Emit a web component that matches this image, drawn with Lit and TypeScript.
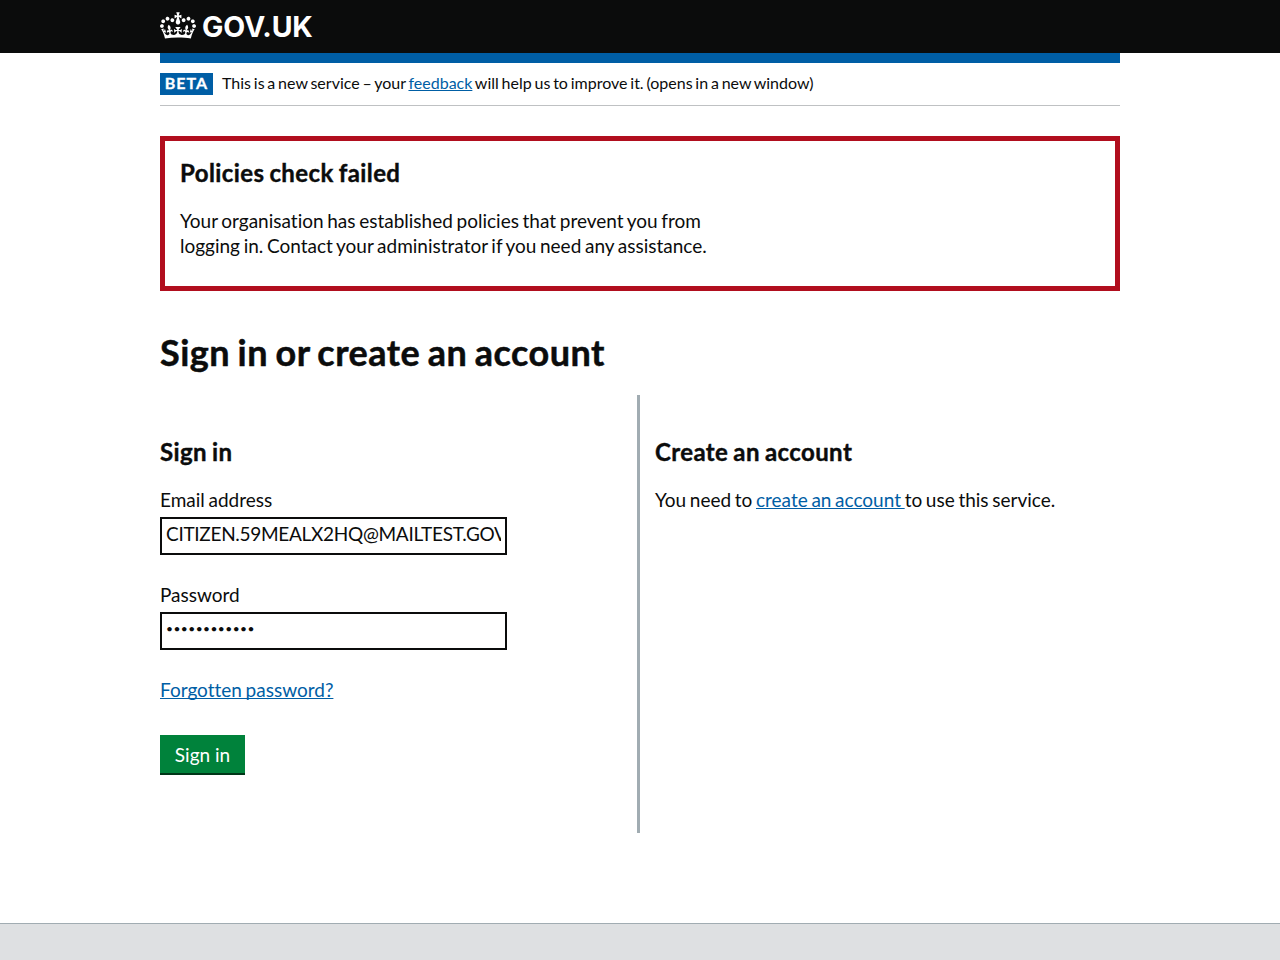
import { LitElement, html, css } from "lit";
import { customElement } from "lit/decorators.js";

@customElement("app-root")
export class AppRoot extends LitElement {
  static styles = css`
    :host { display: flex; flex-direction: column; height: 960px; overflow: hidden; background: #fff; color: #0b0c0c; font: 19px/25px Lato, "Noto Sans", sans-serif; font-variant-ligatures: none; word-spacing: -1.2px; }
    * { box-sizing: border-box; }
    h1, h2, p { margin: 0; }
    a { color: #005ea5; text-decoration: underline; text-underline-offset: 1px; text-decoration-thickness: 1px; text-decoration-skip-ink: none; }
    .wrap { width: 960px; margin: 0 auto; }
    .header { height: 53px; flex: none; background: #0b0c0c; color: #fff; }
    .brand { display: flex; gap: 6px; padding-top: 9px; }
    .crown { width: 36px; height: 27px; margin-top: 3px; }
    .logo { font: 650 28.5px/36px Inter, sans-serif; letter-spacing: -0.15px; white-space: nowrap; }
    .bar { height: 10px; background: #005ea5; }
    .phase { display: flex; align-items: center; gap: 9px; height: 43px; border-bottom: 1px solid #bfc1c3; font-size: 16px; line-height: 20px; white-space: nowrap; }
    .phase-text { padding-bottom: 2px; word-spacing: -1.3px; }
    .tag { width: 53px; height: 22px; background: #005ea5; color: #fff; font-weight: 700; line-height: 20px; text-align: center; letter-spacing: 1px; -webkit-text-stroke: 0.3px; }
    .error { margin-top: 30px; height: 155px; border: 5px solid #b10e1e; padding: 17px 15px 0; }
    h2 { font-size: 24px; line-height: 30px; font-weight: 700; white-space: nowrap; -webkit-text-stroke: 0.4px; letter-spacing: 0.4px; }
    h1 { margin-top: 41px; height: 63px; font-size: 36px; line-height: 40px; font-weight: 700; white-space: nowrap; letter-spacing: 0.5px; word-spacing: -1.8px; -webkit-text-stroke: 0.5px; }
    p { margin-top: 20px; white-space: nowrap; }
    .cols { display: grid; grid-template-columns: 480px 480px; height: 438px; }
    .left { border-right: 3px solid #a1acb2; padding-top: 42px; }
    .right { padding: 42px 15px 0; }
    .label { display: block; margin-top: 20px; }
    .second { margin-top: 27px; }
    .field { display: block; width: 347px; height: 38px; margin-top: 5px; border: 2px solid #0b0c0c; border-radius: 0; padding: 0 4px 5px; font: inherit; color: inherit; background: #fff; outline: none; }
    .email { letter-spacing: -0.3px; }
    .password { font-size: 12px; letter-spacing: 0.45px; padding-bottom: 5px; }
    .forgot { margin-top: 27px; }
    .button { display: block; margin-top: 33px; width: 85px; height: 40px; border: 0; border-bottom: 2px solid #003618; padding: 0; background: #00823b; color: #fff; font: inherit; }
    .footer { margin-top: 90px; flex: 1; background: #dee0e2; border-top: 1px solid #a1acb2; }
  `;
  render() {
    return html`
      <header class="header"><div class="wrap brand">
        <svg class="crown" viewBox="0 0 132 97"><path fill="currentColor" fill-rule="evenodd" d="M25 30.2c3.5 1.5 7.7-.2 9.1-3.7 1.5-3.6-.2-7.8-3.9-9.2-3.6-1.4-7.6.3-9.1 3.9-1.4 3.5.3 7.5 3.9 9zM9 39.5c3.6 1.5 7.8-.2 9.2-3.7 1.5-3.6-.2-7.8-3.9-9.1-3.6-1.5-7.6.2-9.1 3.8-1.4 3.5.3 7.5 3.8 9zM4.4 57.2c3.5 1.5 7.7-.2 9.1-3.8 1.5-3.6-.2-7.7-3.9-9.1-3.5-1.5-7.6.3-9.1 3.8-1.4 3.5.3 7.6 3.9 9.1zm38.3-21.4c3.5 1.5 7.7-.2 9.1-3.8 1.5-3.6-.2-7.7-3.9-9.1-3.6-1.5-7.6.3-9.1 3.8-1.3 3.6.4 7.7 3.9 9.1zm64.4-5.6c-3.6 1.5-7.8-.2-9.1-3.7-1.5-3.6.2-7.8 3.8-9.2 3.6-1.4 7.7.3 9.2 3.9 1.3 3.5-.4 7.5-3.9 9zm15.9 9.3c-3.6 1.5-7.7-.2-9.1-3.7-1.5-3.6.2-7.8 3.7-9.1 3.6-1.5 7.7.2 9.2 3.8 1.5 3.5-.3 7.5-3.8 9zm4.7 17.7c-3.6 1.5-7.8-.2-9.2-3.8-1.5-3.6.2-7.7 3.9-9.1 3.6-1.5 7.7.3 9.2 3.8 1.3 3.5-.4 7.6-3.9 9.1zM89.3 35.8c-3.6 1.5-7.8-.2-9.2-3.8-1.4-3.6.2-7.7 3.9-9.1 3.6-1.5 7.7.3 9.2 3.8 1.4 3.6-.3 7.7-3.9 9.1zM69.7 17.7l8.9 4.7V9.3l-8.9 2.8c-.2-.3-.5-.6-.9-.9L72.4 0H59.6l3.5 11.2c-.3.3-.6.5-.9.9l-8.8-2.8v13.1l8.8-4.7c.3.3.6.7.9.9l-5 15.4v.1c-.2.8-.4 1.6-.4 2.4 0 4.1 3.1 7.5 7 8.1h.2c.3 0 .7.1 1 .1.4 0 .7 0 1-.1h.2c4-.6 7.1-4.1 7.1-8.1 0-.8-.1-1.7-.4-2.4V34l-5.1-15.4c.4-.2.7-.6 1-.9zM66 92.8c16.9 0 32.8 1.1 47.1 3.2 4-16.9 8.9-26.7 14-33.5l-9.6-3.4c1 4.9 1.1 7.2 0 10.2-1.5-1.4-3-4.3-4.2-8.7L108.6 76c2.8-2 5-3.2 7.5-3.3-4.4 9.4-10 11.9-13.6 11.2-4.3-.8-6.3-4.6-5.6-7.9 1-4.7 5.7-5.9 8-.5 4.3-8.7-3-11.4-7.6-8.8 7.1-7.2 7.9-13.5 2.1-21.1-8 6.1-8.1 12.3-4.5 20.8-4.7-5.4-12.1-2.5-9.5 6.2 3.4-5.2 7.9-2 7.2 3.1-.6 4.3-6.4 7.8-13.5 7.2-10.3-.9-10.9-8-11.2-13.8 2.5-.5 7.1 1.8 11 7.3L80.2 60c-4.1 4.4-8 5.3-12.3 5.4 1.4-4.4 8-11.6 8-11.6H55.5s6.4 7.2 7.9 11.6c-4.2-.1-8-1-12.3-5.4l1.4 16.4c3.9-5.5 8.5-7.7 10.9-7.3-.3 5.8-.9 12.8-11.1 13.8-7.2.6-12.9-2.9-13.5-7.2-.7-5 3.8-8.3 7.1-3.1 2.7-8.7-4.6-11.6-9.4-6.2 3.7-8.5 3.6-14.7-4.6-20.8-5.8 7.6-5 13.9 2.2 21.1-4.7-2.6-11.9.1-7.7 8.8 2.3-5.5 7.1-4.2 8.1.5.7 3.3-1.3 7.1-5.7 7.9-3.5.7-9-1.8-13.5-11.2 2.5.1 4.7 1.3 7.5 3.3l-4.7-15.4c-1.2 4.4-2.7 7.2-4.3 8.7-1.1-3-.9-5.3 0-10.2l-9.5 3.4c5 6.9 9.9 16.7 14 33.5 14.8-2.1 30.8-3.2 47.7-3.2z"/></svg>
        <span class="logo">GOV.UK</span>
      </div></header>
      <div class="wrap">
        <div class="bar"></div>
        <div class="phase"><strong class="tag">BETA</strong><span class="phase-text">This is a new service – your <a>feedback</a> will help us to improve it. (opens in a new window)</span></div>
        <section class="error">
          <h2 class="h-error">Policies check failed</h2>
          <p class="msg">Your organisation has established policies that prevent you from<br>logging in. Contact your administrator if you need any assistance.</p>
        </section>
        <h1>Sign in or create an account</h1>
        <main class="cols">
          <div class="left">
            <h2 class="h-sign">Sign in</h2>
            <label class="label">Email address</label>
            <input class="field email" .value=${"CITIZEN.59MEALX2HQ@MAILTEST.GOV.UK"}>
            <label class="label second">Password</label>
            <input class="field password" type="password" .value=${"citizenpass1"}>
            <p class="forgot"><a>Forgotten password?</a></p>
            <button class="button">Sign in</button>
          </div>
          <div class="right">
            <h2 class="h-create">Create an account</h2>
            <p class="create">You need to <a>create an account </a>to use this service.</p>
          </div>
        </main>
      </div>
      <footer class="footer"></footer>`;
  }
}
